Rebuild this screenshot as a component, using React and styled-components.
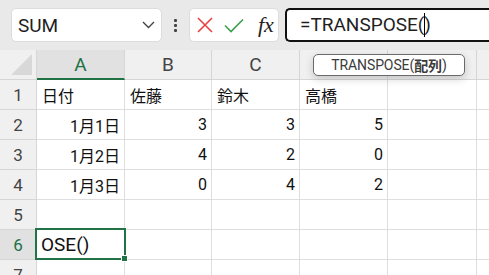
import React from 'react'
import styled, { createGlobalStyle, css } from 'styled-components'

const GlobalStyle = createGlobalStyle`
html, body {
    margin: 0;
    padding: 0;
    background: #ffffff;
    overflow: hidden;
}
body {
    font-family: Roboto, "Noto Sans CJK JP", sans-serif;
}
`

const Page = styled.div`
width: 489px;
height: 275px;
position: relative;
overflow: hidden;
`

const Toolbar = styled.div`
height: 50px;
box-sizing: border-box;
background-color: #e9e9e9;
display: flex;
align-items: flex-start;
padding: 8px 0 0 11px;
`

const NameBox = styled.div`
width: 151px;
height: 34px;
box-sizing: border-box;
background: #ffffff;
border: 1px solid #dcdcdc;
border-radius: 5px;
display: flex;
align-items: center;
justify-content: space-between;
padding: 0 6px 0 6px;
font-size: 19px;
color: #1f1f1f;
`

const Dots = styled.div`
width: 27px;
height: 34px;
display: flex;
flex-direction: column;
align-items: center;
justify-content: center;
gap: 2px;

span {
    width: 3px;
    height: 3px;
    background: #444;
    border-radius: 1px;
}
`

const Buttons = styled.div`
width: 90px;
height: 34px;
box-sizing: border-box;
background: #ffffff;
border: 1px solid #dcdcdc;
border-radius: 5px;
display: flex;
align-items: center;
padding: 0 0 0 7px;
gap: 11px;
`

const Fx = styled.span`
font-family: "Liberation Serif", serif;
font-style: italic;
font-size: 22px;
color: #222;
margin-left: 3px;
line-height: 1;
`

const FormulaInput = styled.div`
flex: 1;
margin-left: 6px;
height: 34px;
box-sizing: border-box;
background: #ffffff;
border: 2px solid #111;
border-right: none;
border-radius: 5px 0 0 5px;
display: flex;
align-items: center;
padding-left: 13px;
font-size: 19px;
color: #1f1f1f;
`

const Caret = styled.span`
display: inline-block;
width: 1px;
height: 24px;
background: #000;
vertical-align: middle;
margin: 0 -1px 0 0;
`

const Sheet = styled.div`
display: grid;
grid-template-columns: 37px 88px 87px 88px 88px 89px 89px;
grid-auto-rows: 30px;
`

const HeaderCell = styled.div`
box-sizing: border-box;
background: ${p => (p.$active ? '#e1e1e1' : '#f0f0f0')};
border-right: 1px solid #d6d6d6;
border-bottom: ${p => (p.$active && p.$col ? '2px solid #217346' : '1px solid #d6d6d6')};
color: ${p => (p.$active ? '#1e7145' : '#444')};
font-size: ${p => (p.$col ? '19px' : '17px')};
display: flex;
align-items: center;
justify-content: center;
position: relative;
`

const Corner = styled(HeaderCell)`
svg {
    position: absolute;
    right: 3px;
    bottom: 3px;
}
`

const Cell = styled.div`
box-sizing: border-box;
border-right: 1px solid #dedede;
border-bottom: 1px solid #dedede;
display: flex;
align-items: center;
justify-content: ${p => (p.$num ? 'flex-end' : 'flex-start')};
padding: 0 4px 0 5px;
font-size: 16px;
color: #111;
white-space: nowrap;
position: relative;

${p => p.$active && css`
    font-size: 19px;
    padding-left: 4px;
    &::after {
        content: '';
        position: absolute;
        left: -2px;
        top: -2px;
        right: -2px;
        bottom: -1px;
        border: 2px solid #217346;
    }
    &::before {
        content: '';
        position: absolute;
        right: -4px;
        bottom: -3px;
        width: 5px;
        height: 5px;
        background: #217346;
        border: 1px solid #fff;
        z-index: 2;
    }
`}
`

const Tooltip = styled.div`
position: absolute;
left: 313px;
top: 54px;
width: 152px;
height: 22px;
box-sizing: border-box;
background: #ffffff;
border: 1px solid #6a6a6a;
border-radius: 5px;
box-shadow: 0 3px 8px rgba(0, 0, 0, 0.18);
display: flex;
align-items: center;
justify-content: center;
font-size: 14px;
letter-spacing: -0.1px;
color: #3b3b3b;
white-space: nowrap;

b {
    font-weight: 700;
}
`

const cols = ['A', 'B', 'C', 'D', 'E', 'F']

const rows = [
    [{ v: '日付' }, { v: '佐藤' }, { v: '鈴木' }, { v: '高橋' }, {}, {}],
    [{ v: '1月1日', n: true }, { v: '3', n: true }, { v: '3', n: true }, { v: '5', n: true }, {}, {}],
    [{ v: '1月2日', n: true }, { v: '4', n: true }, { v: '2', n: true }, { v: '0', n: true }, {}, {}],
    [{ v: '1月3日', n: true }, { v: '0', n: true }, { v: '4', n: true }, { v: '2', n: true }, {}, {}],
    [{}, {}, {}, {}, {}, {}],
    [{ v: 'OSE()', a: true }, {}, {}, {}, {}, {}],
    [{}, {}, {}, {}, {}, {}],
]

const App = () => {
    return (
        <Page>
            <GlobalStyle />
            <Toolbar>
                <NameBox>
                    <span>SUM</span>
                    <svg width="13" height="8" viewBox="0 0 13 8">
                        <polyline points="1,1 6.5,6.5 12,1" fill="none" stroke="#444" strokeWidth="1.4" />
                    </svg>
                </NameBox>
                <Dots>
                    <span />
                    <span />
                    <span />
                </Dots>
                <Buttons>
                    <svg width="16" height="16" viewBox="0 0 16 16">
                        <path d="M1 1 L15 15 M15 1 L1 15" stroke="#e8423f" strokeWidth="1.6" fill="none" />
                    </svg>
                    <svg width="20" height="15" viewBox="0 0 20 15">
                        <path d="M1 7.5 L7 13.5 L19 1.5" stroke="#3c9f4c" strokeWidth="1.6" fill="none" />
                    </svg>
                    <Fx>fx</Fx>
                </Buttons>
                <FormulaInput>
                    <span>=TRANSPOSE(<Caret />)</span>
                </FormulaInput>
            </Toolbar>
            <Sheet>
                <Corner>
                    <svg width="22" height="22" viewBox="0 0 22 22">
                        <polygon points="21,0 21,21 0,21" fill="#d8d8d8" />
                    </svg>
                </Corner>
                {cols.map(c => (
                    <HeaderCell key={c} $col $active={c === 'A'}>{c}</HeaderCell>
                ))}
                {rows.map((r, i) => (
                    <React.Fragment key={i}>
                        <HeaderCell $active={i === 5}>{i + 1}</HeaderCell>
                        {r.map((cell, j) => (
                            <Cell key={j} $num={cell.n} $active={cell.a}>{cell.v}</Cell>
                        ))}
                    </React.Fragment>
                ))}
            </Sheet>
            <Tooltip>
                TRANSPOSE(<b>配列</b>)
            </Tooltip>
        </Page>
    )
}

export default App
